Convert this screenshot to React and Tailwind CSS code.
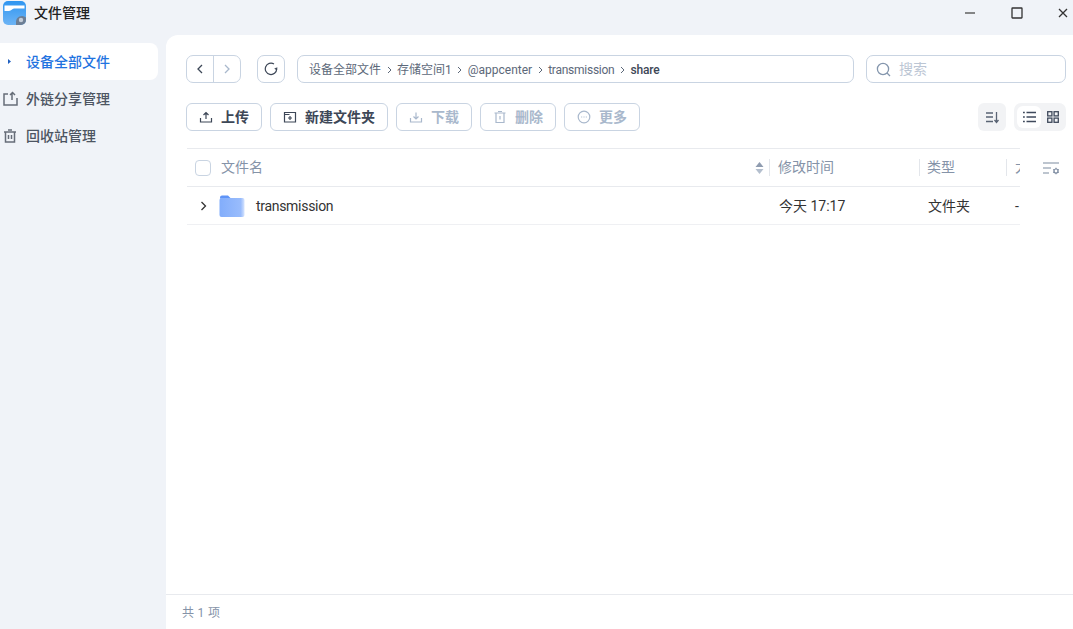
const cjk = { fontFamily: 'Roboto, "Noto Sans CJK SC", sans-serif' }

function Btn({ w, label, disabled, children }) {
    return (
        <button className={`flex h-[28px] items-center justify-center gap-[8px] rounded-[6px] border border-[#c9d4e2] text-[14px] font-bold ${w} ${disabled ? "text-[#a9b8cc]" : "text-[#3d4757]"}`}>
            {children}
            <span>{label}</span>
        </button>
    )
}

function Icon({ size = 14, sw = 1.2, children, className = "" }) {
    return (
        <svg width={size} height={size} viewBox="0 0 14 14" fill="none" stroke="currentColor" strokeWidth={sw} className={className}>
            {children}
        </svg>
    )
}

function Crumb({ children, className = "" }) {
    return <span className={className}>{children}</span>
}

function Sep() {
    return (
        <svg width="5" height="8" viewBox="0 0 5 8" fill="none" stroke="#5c6879" strokeWidth="1" className="mx-[5.500px]">
            <path d="M1 1l3 3-3 3" />
        </svg>
    )
}

export default function App() {
    return (
        <div className="flex h-[629px] w-[1073px] flex-col overflow-hidden bg-[#f0f3f8]" style={cjk}>
            {/* title bar */}
            <div className="flex h-[35px] shrink-0 items-start">
                <svg width="23" height="24" viewBox="0 0 23 24" className="ml-[3px] mt-[1px]">
                    <defs>
                        <linearGradient id="appg" x1="0" y1="0" x2="0" y2="1">
                            <stop offset="0" stopColor="#2f95f0" />
                            <stop offset="1" stopColor="#6db4f5" />
                        </linearGradient>
                    </defs>
                    <rect width="23" height="24" rx="5" fill="url(#appg)" />
                    <path d="M1.500 4.500H21.500V7.500H11C9 7.500 8.500 10 6 10H1.500z" fill="#fff" />
                    <path d="M13 24v-3a6 6 0 0 1 10-4.500V19a5 5 0 0 1-5 5z" fill="#6d7e94" />
                    <circle cx="18" cy="19" r="2.200" fill="#c3ccd8" />
                </svg>
                <span className="ml-[8px] mt-[3px] text-[14px] font-medium leading-[20px] text-[#222]">文件管理</span>
                <div className="ml-auto flex items-center pt-[7px]">
                    <svg width="10" height="12" viewBox="0 0 10 12" className="mr-[36px]">
                        <path d="M0 6h10" stroke="#555" strokeWidth="1.400" />
                    </svg>
                    <svg width="12" height="12" viewBox="0 0 12 12" fill="none" stroke="#333" strokeWidth="1.300" className="mr-[35px]">
                        <rect x="1" y="1" width="10" height="10" rx="0.500" />
                    </svg>
                    <svg width="10" height="10" viewBox="0 0 10 10" fill="none" stroke="#333" strokeWidth="1.300" className="mr-[5px]">
                        <path d="M1 1l8 8M9 1l-8 8" />
                    </svg>
                </div>
            </div>

            <div className="flex min-h-0 flex-1">
                {/* sidebar */}
                <div className="w-[166px] shrink-0 pt-[8px] text-[14px] font-medium text-[#4d5562]">
                    <div className="flex h-[37px] w-[158px] items-center rounded-r-[8px] bg-white text-[#1f73e0]">
                        <svg width="3" height="5" viewBox="0 0 3 5" className="ml-[8px] mr-[16px]">
                            <path d="M0 0l3 2.500L0 5z" fill="#1f5fc0" />
                        </svg>
                        <span className="-ml-[1px] pt-[1px]">设备全部文件</span>
                    </div>
                    <div className="flex h-[37px] items-center">
                        <svg width="15" height="15" viewBox="0 0 15 15" fill="none" stroke="#666d78" strokeWidth="1.500" className="ml-[3px] mr-[8px]">
                            <path d="M5 3H1v11h13V7M9 9V2M7 4l2.500-2.500L12 4" />
                        </svg>
                        <span className="pt-[1px]">外链分享管理</span>
                    </div>
                    <div className="flex h-[37px] items-center">
                        <svg width="14" height="14" viewBox="0 0 14 14" fill="none" stroke="#666d78" strokeWidth="1.500" className="ml-[3px] mr-[9px]">
                            <path d="M1 3h12M5 1h4M2.500 3v10h9V3M5.500 6v4M8.500 6v4" />
                        </svg>
                        <span className="pt-[1px]">回收站管理</span>
                    </div>
                </div>

                {/* main panel */}
                <div className="flex min-w-0 flex-1 flex-col rounded-tl-[12px] bg-white">
                    <div className="flex-1 pl-[20px] pr-[7px] pt-[20px]">
                        {/* nav + breadcrumb + search */}
                        <div className="flex h-[28px] items-stretch">
                            <div className="flex w-[55px] rounded-[7px] border border-[#c9d4e2]">
                                <div className="flex w-[27px] items-center justify-center border-r border-[#c9d4e2] text-[#3d4757]">
                                    <svg width="6" height="10" viewBox="0 0 6 10" fill="none" stroke="currentColor" strokeWidth="1.300">
                                        <path d="M5 1L1 5l4 4" />
                                    </svg>
                                </div>
                                <div className="flex flex-1 items-center justify-center text-[#a9b8cc]">
                                    <svg width="6" height="10" viewBox="0 0 6 10" fill="none" stroke="currentColor" strokeWidth="1.300">
                                        <path d="M1 1l4 4-4 4" />
                                    </svg>
                                </div>
                            </div>
                            <div className="ml-[16px] flex w-[28px] items-center justify-center rounded-[7px] border border-[#c9d4e2] text-[#3d4757]">
                                <svg width="14" height="14" viewBox="0 0 14 14" fill="none" stroke="currentColor" strokeWidth="1.200">
                                    <path d="M12.700 7A5.700 5.700 0 1 1 10 2" />
                                    <path d="M12.900 5.500L12.500 7.500 10.800 6.300" />
                                </svg>
                            </div>
                            <div className="ml-[12px] flex w-[557px] items-center rounded-[7px] border border-[#c9d4e2] pl-[11px] pt-[2px] text-[12px] text-[#5c6879]">
                                <Crumb>设备全部文件</Crumb>
                                <Sep />
                                <Crumb>存储空间1</Crumb>
                                <Sep />
                                <Crumb>@appcenter</Crumb>
                                <Sep />
                                <Crumb className="tracking-[-0.25px]">transmission</Crumb>
                                <Sep />
                                <Crumb className="font-medium tracking-[-0.2px] text-[#3d4757]">share</Crumb>
                            </div>
                            <div className="ml-[12px] flex w-[200px] items-center rounded-[7px] border border-[#c9d4e2] pl-[9px] text-[14px] text-[#bcc6d4]">
                                <svg width="15" height="15" viewBox="0 0 15 15" fill="none" stroke="#8496ad" strokeWidth="1.300" className="mr-[8px]">
                                    <circle cx="7" cy="7" r="5.600" />
                                    <path d="M11 11l3 3" />
                                </svg>
                                <span>搜索</span>
                            </div>
                        </div>

                        {/* toolbar */}
                        <div className="mt-[20px] flex h-[28px] items-center gap-[8px]">
                            <Btn w="w-[76px]" label="上传">
                                <Icon><path d="M1.500 8v4h11V8M7 9V2.500M4.500 5L7 2.500 9.500 5" /></Icon>
                            </Btn>
                            <Btn w="w-[118px]" label="新建文件夹">
                                <Icon><path d="M1.500 2.500h11v9.500h-11zM1.500 4.500h5M7 6v4M5 8h4" /></Icon>
                            </Btn>
                            <Btn w="w-[76px]" label="下载" disabled>
                                <Icon><path d="M1.500 8v4h11V8M7 2.500V9M4.500 6.500L7 9l2.500-2.500" /></Icon>
                            </Btn>
                            <Btn w="w-[76px]" label="删除" disabled>
                                <Icon><path d="M1.500 3h11M5 1.500h4M3 3v9.500h8V3M7 6v3.500" /></Icon>
                            </Btn>
                            <Btn w="w-[76px]" label="更多" disabled>
                                <Icon>
                                    <circle cx="7" cy="7" r="5.800" />
                                    <path d="M4.200 7h1M6.500 7h1M8.800 7h1" />
                                </Icon>
                            </Btn>
                            <div className="ml-auto flex items-center gap-[8px]">
                                <div className="flex h-[28px] w-[28px] items-center justify-center rounded-[6px] bg-[#f2f3f5] text-[#5a6474]">
                                    <svg width="13" height="13" viewBox="0 0 13 13" fill="none" stroke="currentColor" strokeWidth="1.300">
                                        <path d="M0 2h7M0 6h7M0 10.500h7M10.500 1v10M8.500 9l2 2.500 2-2.500" />
                                    </svg>
                                </div>
                                <div className="flex h-[28px] w-[52px] items-center rounded-[7px] bg-[#f2f3f5] pl-[3px]">
                                    <div className="flex h-[22px] w-[24px] items-center justify-center rounded-[6px] bg-white text-[#3f4a5c]">
                                        <svg width="13" height="12" viewBox="0 0 13 12" fill="none" stroke="currentColor" strokeWidth="1.300">
                                            <path d="M3.500 1.500H13M3.500 6H13M3.500 10.500H13M0 1.500h1.800M0 6h1.800M0 10.500h1.800" />
                                        </svg>
                                    </div>
                                    <div className="flex w-[23px] items-center justify-center text-[#3f4a5c]">
                                        <svg width="12" height="12" viewBox="0 0 12 12" fill="none" stroke="currentColor" strokeWidth="1.300">
                                            <rect x="0.700" y="0.700" width="4.200" height="4.200" />
                                            <rect x="7.100" y="0.700" width="4.200" height="4.200" />
                                            <rect x="0.700" y="7.100" width="4.200" height="4.200" />
                                            <rect x="7.100" y="7.100" width="4.200" height="4.200" />
                                        </svg>
                                    </div>
                                </div>
                            </div>
                        </div>

                        {/* table */}
                        <div className="mt-[17px] flex">
                            <div className="ml-[1px] w-[833px] shrink-0 overflow-hidden">
                                <div className="flex h-[39px] items-center border-y border-[#e8eaee] text-[14px] text-[#8593a8]">
                                    <span className="ml-[8px] h-[16px] w-[16px] rounded-[4px] border border-[#c9d4e2]" />
                                    <span className="ml-[10px]">文件名</span>
                                    <svg width="9" height="14" viewBox="0 0 9 14" className="ml-auto mr-[5px]">
                                        <path d="M4.500 1l4 5H.500z" fill="#8f9cb0" />
                                        <path d="M4.500 13l4-5H.500z" fill="#b4bfce" />
                                    </svg>
                                    <span className="h-[17px] w-px bg-[#e3e6eb]" />
                                    <span className="ml-[8px] w-[141px]">修改时间</span>
                                    <span className="h-[17px] w-px bg-[#e3e6eb]" />
                                    <span className="ml-[7px] w-[79px]">类型</span>
                                    <span className="h-[17px] w-px bg-[#e3e6eb]" />
                                    <span className="ml-[8px] w-[5px] overflow-hidden whitespace-nowrap">大小</span>
                                </div>
                                <div className="flex h-[38px] items-center border-b border-[#eff0f3] pt-[1px] text-[14px] text-[#333]">
                                    <svg width="7" height="10" viewBox="0 0 7 10" fill="none" stroke="#333" strokeWidth="1.300" className="ml-[13px]">
                                        <path d="M1.500 1l4 4-4 4" />
                                    </svg>
                                    <svg width="26" height="24" viewBox="0 0 26 24" className="ml-[12px]">
                                        <defs>
                                            <linearGradient id="fold" x1="0" y1="0" x2="1" y2="0">
                                                <stop offset="0" stopColor="#82adfb" />
                                                <stop offset="0.850" stopColor="#99bcfc" />
                                                <stop offset="1" stopColor="#d6e4fe" />
                                            </linearGradient>
                                        </defs>
                                        <path d="M1 3.500A2 2 0 0 1 3 1.500h6l3 3h-11z" fill="#5f94f7" />
                                        <rect x="0.500" y="4" width="25" height="19" rx="2" fill="url(#fold)" />
                                    </svg>
                                    <span className="ml-[11px] w-[523px] pt-[1px] tracking-[-0.3px]">transmission</span>
                                    <span className="w-[149px] pt-[1px]">今天 17:17</span>
                                    <span className="w-[87px] pt-[1px]">文件夹</span>
                                    <span className="pt-[1px]">-</span>
                                </div>
                            </div>
                            <div className="flex h-[39px] flex-1 items-center justify-end pr-[6px] text-[#7d8ba0]">
                                <svg width="17" height="14" viewBox="0 0 17 14" fill="none" stroke="currentColor" strokeWidth="1.200">
                                    <path d="M0 2h16M0 7h8M0 12h6" />
                                    <circle cx="13" cy="10" r="2" />
                                    <path d="M13 6.800v1.200M13 12v1.200M10.200 8.400l1 .6M14.800 11l1 .6M10.200 11.600l1-.6M14.800 9l1-.6" />
                                </svg>
                            </div>
                        </div>
                    </div>
                    <div className="flex h-[35px] items-center border-t border-[#e8eaee] pl-[16px] pt-[2px] text-[12px] tracking-[0.3px] text-[#8593a8]">共 1 项</div>
                </div>
            </div>
        </div>
    )
}
